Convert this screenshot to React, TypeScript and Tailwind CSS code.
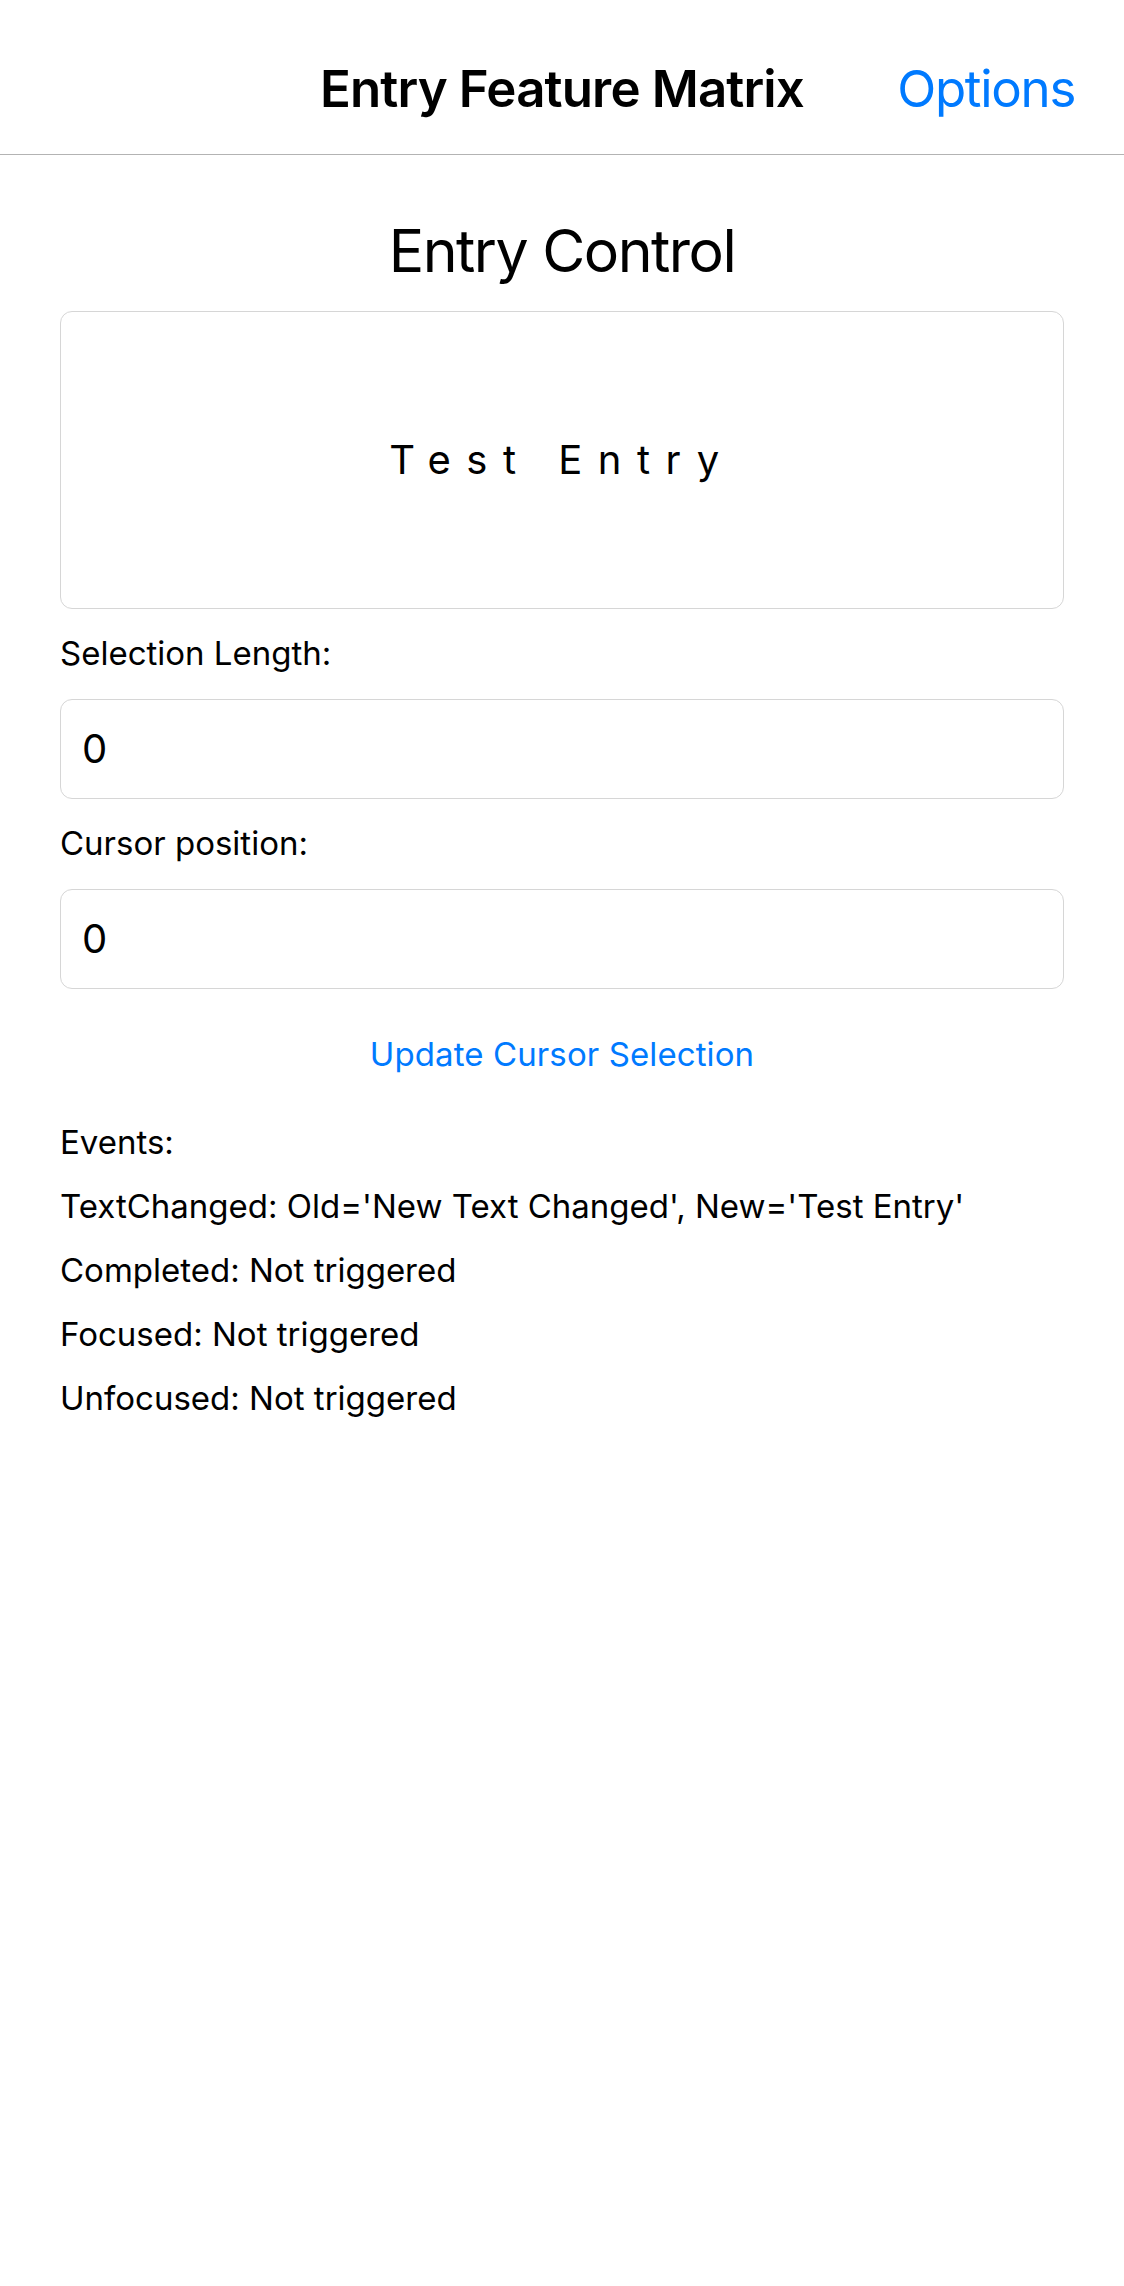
import React from "react";

const events = [
  "TextChanged: Old='New Text Changed', New='Test Entry'",
  "Completed: Not triggered",
  "Focused: Not triggered",
  "Unfocused: Not triggered",
];

const Field = ({ value }: { value: string }) => (
  <div className="mt-[29px] h-[100px] flex items-center rounded-[12px] border border-[#d6d6d6] pl-[21px] text-[40px] leading-none text-black">
    {value}
  </div>
);

export default function App() {
  return (
    <div className="min-h-[2286px] bg-white font-['Inter','Liberation_Sans',sans-serif] text-black">
      <header className="relative h-[155px] border-b border-[#b3b3b3] flex justify-center pt-[63px]">
        <h1 className="text-[51px] leading-[51px] font-semibold tracking-[-0.85px]">
          Entry Feature Matrix
        </h1>
        <span className="absolute right-[49px] top-[63px] text-[51px] leading-[51px] text-[#007aff] tracking-[-1.3px]">
          Options
        </span>
      </header>

      <main className="px-[60px] pb-10 flex flex-col">
        <h2 className="mt-[66px] text-center text-[59px] leading-[59px] tracking-[-1.5px]">Entry Control</h2>

        <div className="mt-[31px] h-[298px] flex items-center justify-center rounded-[12px] border border-[#d6d6d6]">
          <span className="text-[40px] leading-none tracking-[15.5px]">Test Entry</span>
        </div>

        <p className="mt-[28px] text-[33px] leading-[33px]">Selection Length:</p>
        <Field value="0" />

        <p className="mt-[28px] text-[33px] leading-[33px]">Cursor position:</p>
        <Field value="0" />

        <button className="mt-[49px] self-center text-[33px] leading-[33px] tracking-[0.1px] text-[#007aff]">
          Update Cursor Selection
        </button>

        <div className="mt-[55px] flex flex-col gap-[31px] text-[33px] leading-[33px]">
          <p>Events:</p>
          {events.map((e) => (
            <p key={e}>{e}</p>
          ))}
        </div>
      </main>
    </div>
  );
}
